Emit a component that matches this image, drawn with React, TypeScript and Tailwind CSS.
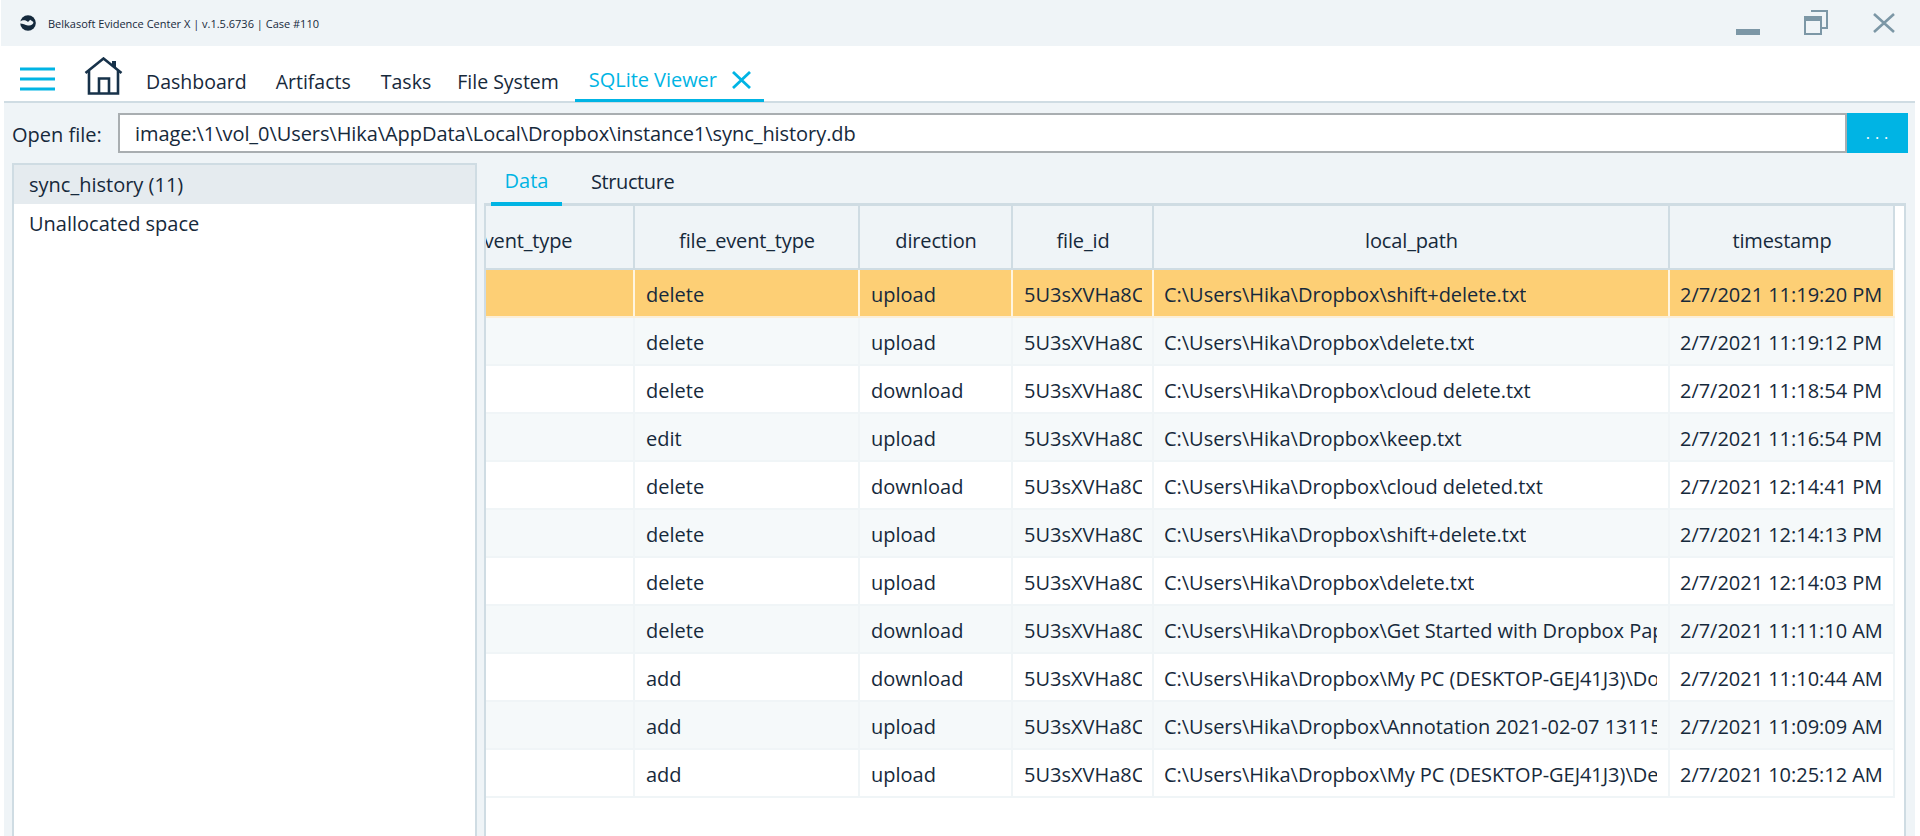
const columns = [
  { name: "event_type", width: "w-[224px]" },
  { name: "file_event_type", width: "w-[225px]" },
  { name: "direction", width: "w-[153px]" },
  { name: "file_id", width: "w-[141px]" },
  { name: "local_path", width: "w-[516px]" },
  { name: "timestamp", width: "w-[225px]" },
];

const fileId = "5U3sXVHa8CQ";
const base = "C:\\Users\\Hika\\Dropbox\\";

const rows = [
  ["delete", "upload", "shift+delete.txt", "2/7/2021 11:19:20 PM"],
  ["delete", "upload", "delete.txt", "2/7/2021 11:19:12 PM"],
  ["delete", "download", "cloud delete.txt", "2/7/2021 11:18:54 PM"],
  ["edit", "upload", "keep.txt", "2/7/2021 11:16:54 PM"],
  ["delete", "download", "cloud deleted.txt", "2/7/2021 12:14:41 PM"],
  ["delete", "upload", "shift+delete.txt", "2/7/2021 12:14:13 PM"],
  ["delete", "upload", "delete.txt", "2/7/2021 12:14:03 PM"],
  ["delete", "download", "Get Started with Dropbox Paper", "2/7/2021 11:11:10 AM"],
  ["add", "download", "My PC (DESKTOP-GEJ41J3)\\Do", "2/7/2021 11:10:44 AM"],
  ["add", "upload", "Annotation 2021-02-07 131152", "2/7/2021 11:09:09 AM"],
  ["add", "upload", "My PC (DESKTOP-GEJ41J3)\\De", "2/7/2021 10:25:12 AM"],
];

function Logo() {
  return (
    <svg width="16" height="16" viewBox="0 0 16 16" className="ml-[19px] mr-[12px]">
      <circle cx="8" cy="8" r="7.8" fill="#14293c" />
      <path d="M0 6.6C3 4.4 6 5 8 7L10.2 4.8L13.4 7C13.6 9.6 10.4 11 8 10.4C5 9.8 3 8.6 0 8.4Z" fill="#eff4f7" />
    </svg>
  );
}

function WindowControls() {
  return (
    <div className="ml-auto flex items-start h-full">
      <svg width="24" height="6" viewBox="0 0 24 6" className="mt-[29px]">
        <rect width="24" height="6" fill="#7c97a6" />
      </svg>
      <svg width="24" height="25" viewBox="0 0 24 25" className="ml-[44px] mt-[10px]">
        <path d="M7 1H23V18H18" fill="none" stroke="#7c97a6" strokeWidth="2" />
        <rect x="1" y="7" width="16" height="17" fill="none" stroke="#7c97a6" strokeWidth="2" />
        <rect x="0" y="6" width="18" height="5" fill="#7c97a6" />
      </svg>
      <svg width="22" height="20" viewBox="0 0 22 20" className="ml-[45px] mr-[25px] mt-[13px]">
        <path d="M1 1L21 19M21 1L1 19" stroke="#7c97a6" strokeWidth="2.6" />
      </svg>
    </div>
  );
}

function HomeIcon() {
  return (
    <svg width="39" height="38" viewBox="0 0 39 38" className="ml-[29px] mr-[23px] mt-[2px] shrink-0">
      <path d="M1.5 16L19.5 1.5L37.5 16" fill="none" stroke="#17324a" strokeWidth="2.6" />
      <path d="M5 14V36.5H34V14" fill="none" stroke="#17324a" strokeWidth="2.6" />
      <path d="M15 36.5V21.5H25V36.5" fill="none" stroke="#17324a" strokeWidth="2.6" />
      <rect x="28" y="4" width="4" height="6" fill="#17324a" />
    </svg>
  );
}

function NavItem({ label, margin }: { label: string; margin: string }) {
  return <span className={`text-[19.5px] pt-[13px] text-[#16293b] ${margin}`}>{label}</span>;
}

export default function App() {
  return (
    <div className="w-[1920px] h-[836px] overflow-hidden bg-white flex flex-col font-['Open_Sans',sans-serif] text-[#16293b]">
      <div className="h-[46px] ml-px shrink-0 bg-[#eff4f7] flex items-center">
        <Logo />
        <span className="text-[11px] pt-[2px]">Belkasoft Evidence Center X | v.1.5.6736 | Case #110</span>
        <WindowControls />
      </div>

      <div className="h-[57px] ml-1 mr-[5px] shrink-0 flex items-stretch border-b-2 border-[#cfdce3]">
        <div className="flex items-center pt-[3px]">
          <svg width="35" height="24" viewBox="0 0 35 24" className="ml-[16px] mt-[7px]">
            <path d="M0 2H35M0 12H35M0 22H35" stroke="#00b4e4" strokeWidth="3" />
          </svg>
          <HomeIcon />
          <NavItem label="Dashboard" margin="mr-[29px]" />
          <NavItem label="Artifacts" margin="mr-[30px]" />
          <NavItem label="Tasks" margin="mr-[26px]" />
          <NavItem label="File System" margin="mr-[16px]" />
        </div>
        <div className="w-[189px] -mb-[1px] pt-[15px] border-b-[3px] border-[#00b4e4] flex items-center pl-[14px] text-[#00b4e4]">
          <span className="text-[20px] tracking-[-0.05px]">SQLite Viewer</span>
          <svg width="19" height="18" viewBox="0 0 19 18" className="ml-[15px]">
            <path d="M1 1L18 17M18 1L1 17" stroke="#00b4e4" strokeWidth="2.8" />
          </svg>
        </div>
      </div>

      <div className="flex-1 min-h-0 ml-1 mr-[5px] bg-[#eff4f7] flex flex-col">
        <div className="mt-[10px] h-10 shrink-0 flex items-center pl-2 pr-[7px]">
          <span className="w-[106px] pt-[3px] text-[20px]">Open file:</span>
          <div className="flex-1 h-10 pt-[2px] bg-white border-2 border-[#a9aeb1] flex items-center pl-[15px] text-[20px] tracking-[-0.07px]">
            image:\1\vol_0\Users\Hika\AppData\Local\Dropbox\instance1\sync_history.db
          </div>
          <div className="w-[61px] h-10 pl-[4px] bg-[#00b4e4] text-white text-[16px] tracking-[5px] flex items-center justify-center">...</div>
        </div>

        <div className="flex-1 min-h-0 mt-[10px] flex pl-2">
          <div className="w-[465px] shrink-0 bg-white border-2 border-b-0 border-[#cfdce3]">
            <div className="h-[39px] bg-[#e5ebef] flex items-center pl-[15px] text-[20px]">sync_history (11)</div>
            <div className="h-10 flex items-center pl-[15px] text-[20px]">Unallocated space</div>
          </div>

          <div className="w-[422px] flex-1 ml-[7px] mr-[9px] min-w-0 flex flex-col">
            <div className="h-[43px] shrink-0 flex border-b-[3px] border-[#cfdce3] pl-[7px]">
              <div className="w-[71px] h-[43px] pb-[3px] border-b-4 border-[#00b4e4] text-[#00b4e4] text-[20px] flex items-center justify-center">Data</div>
              <div className="ml-[29px] h-10 pb-[3px] text-[20px] tracking-[-0.4px] flex items-center">Structure</div>
            </div>
            <div className="flex-1 bg-white border-x-2 border-[#cfdce3] overflow-hidden">
              <div className="-ml-[75px] w-max">
                <div className="flex h-16 bg-[#eff4f7] border-b-2 border-[#cfdce3]">
                  {columns.map((c) => (
                    <div key={c.name} className={`${c.width} pt-[8px] pl-px border-r-2 border-[#cfdce3] flex items-center justify-center text-[20px] tracking-[-0.15px]`}>
                      {c.name}
                    </div>
                  ))}
                </div>
                {rows.map((r, i) => {
                  const bg = i === 0 ? "bg-[#fdcf75]" : i % 2 === 1 ? "bg-[#f5f9fa]" : "bg-white";
                  const cell = `pt-[3px] border-r-2 ${i === 0 ? "border-[#fff5e0]" : "border-[#f0f5f7]"} flex items-center overflow-hidden whitespace-nowrap`;
                  return (
                    <div key={i} className={`flex h-12 text-[20px] border-b-2 ${i === 0 ? "border-[#fbefd8]" : "border-[#f0f5f7]"} ${bg}`}>
                      <div className={`w-[224px] ${cell}`} />
                      <div className={`w-[225px] pl-[11px] ${cell}`}>{r[0]}</div>
                      <div className={`w-[153px] pl-[11px] ${cell}`}>{r[1]}</div>
                      <div className={`w-[141px] pl-[11px] pr-[10px] ${cell}`}>
                        <span className="overflow-hidden">{fileId}</span>
                      </div>
                      <div className={`w-[516px] pl-[10px] pr-[11px] tracking-[-0.03px] ${cell}`}>
                        <span className="overflow-hidden">{base + r[2]}</span>
                      </div>
                      <div className={`w-[225px] pl-[10px] tracking-[-0.03px] ${cell}`}>{r[3]}</div>
                    </div>
                  );
                })}
              </div>
            </div>
          </div>
        </div>
      </div>
    </div>
  );
}
